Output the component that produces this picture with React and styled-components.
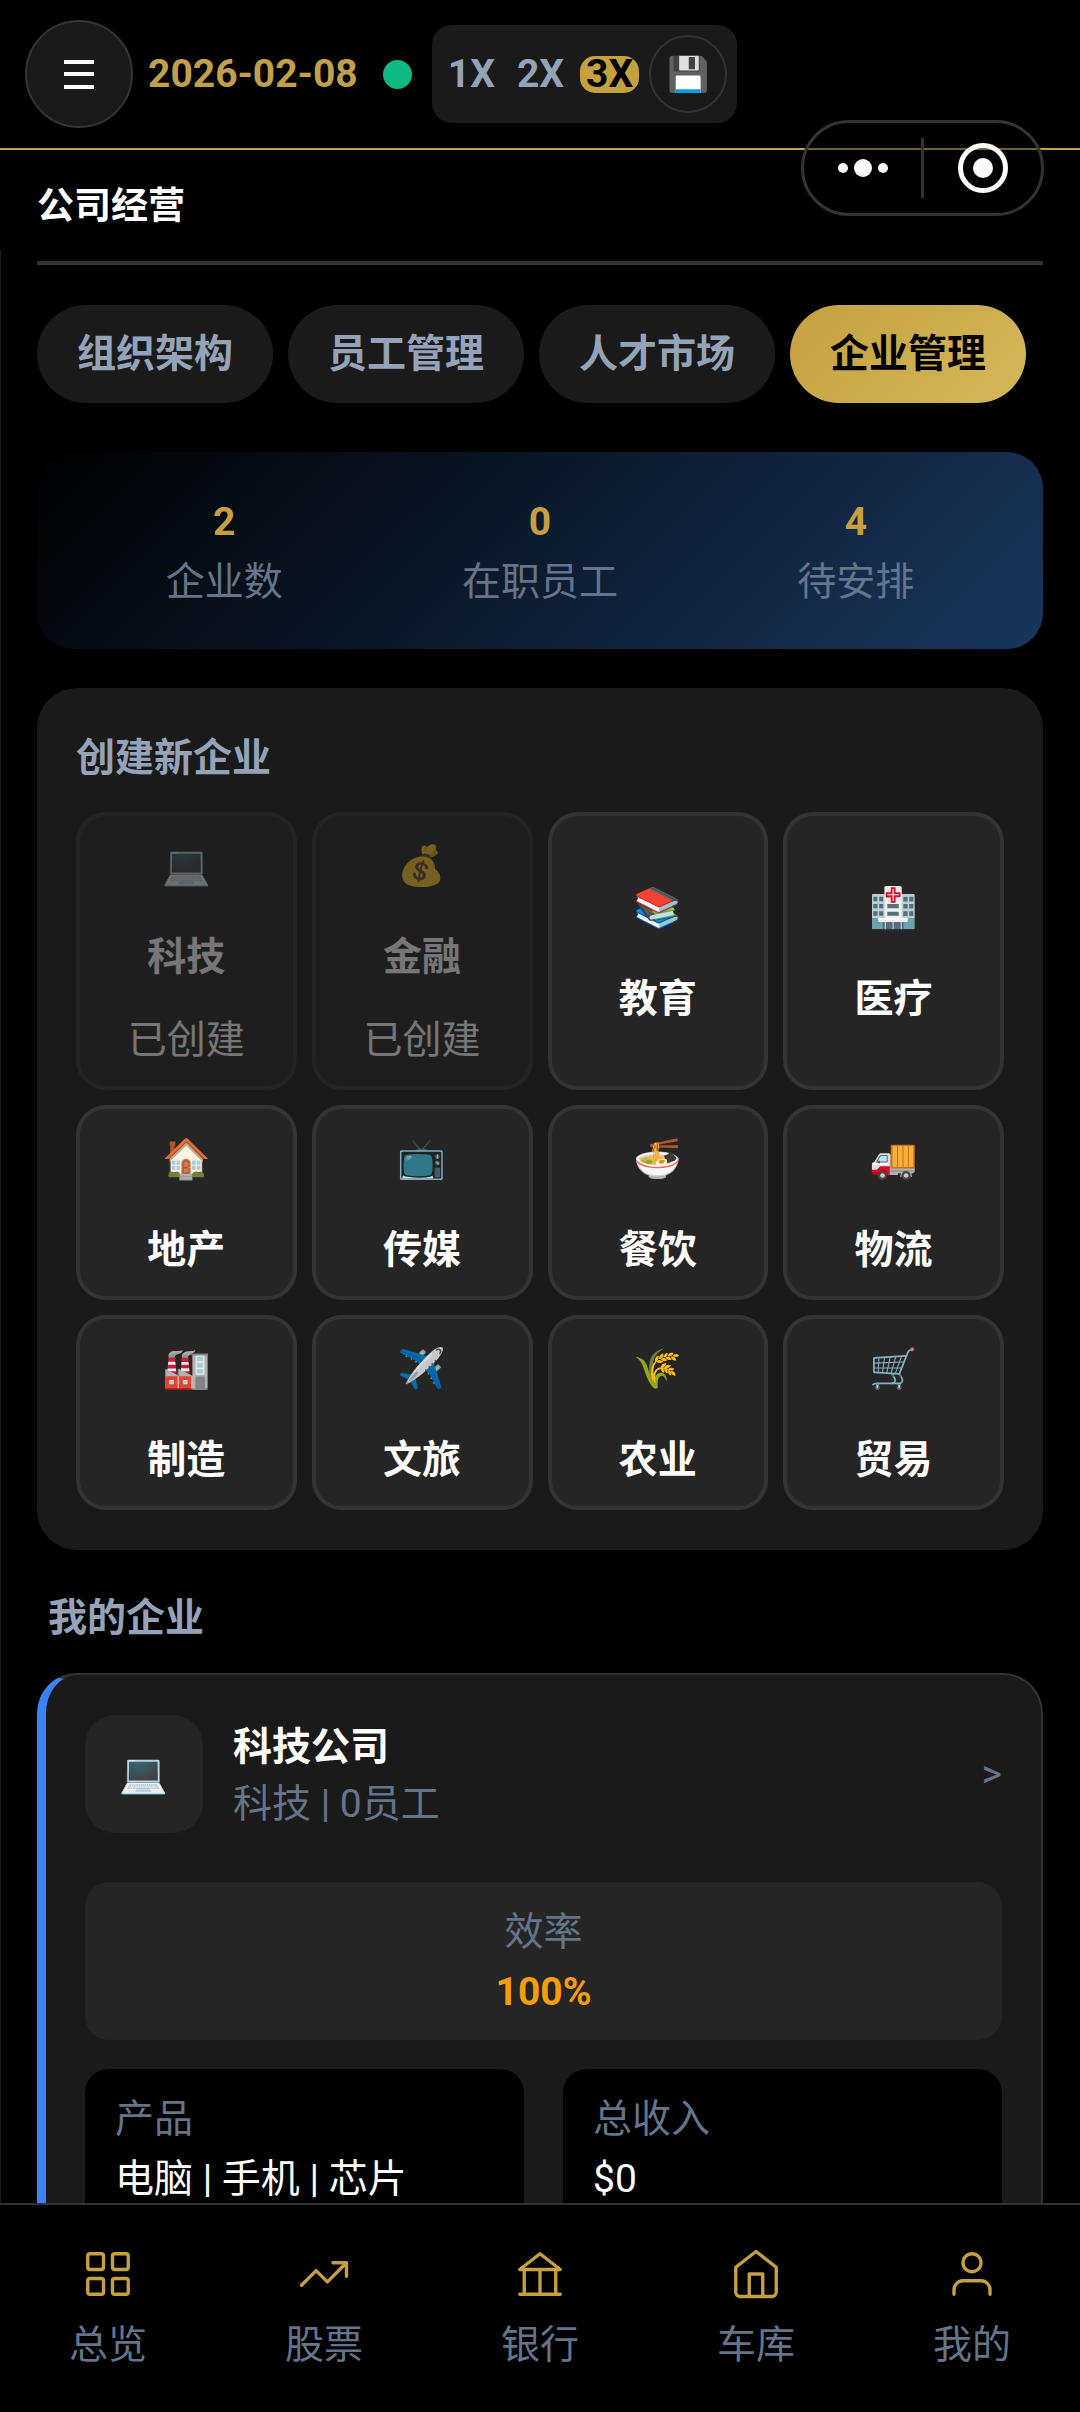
import React, { useState } from 'react';
import styled, { createGlobalStyle } from 'styled-components';


const industries = [
    { icon: '💻', name: '科技', created: true },
    { icon: '💰', name: '金融', created: true },
    { icon: '📚', name: '教育' },
    { icon: '🏥', name: '医疗' },
    { icon: '🏠', name: '地产' },
    { icon: '📺', name: '传媒' },
    { icon: '🍜', name: '餐饮' },
    { icon: '🚚', name: '物流' },
    { icon: '🏭', name: '制造' },
    { icon: '✈️', name: '文旅' },
    { icon: '🌾', name: '农业' },
    { icon: '🛒', name: '贸易' },
];

const stats = [
    { value: 2, label: '企业数' },
    { value: 0, label: '在职员工' },
    { value: 4, label: '待安排' },
];

const tabs = ['组织架构', '员工管理', '人才市场', '企业管理'];

const navItems = [
    {
        label: '总览',
        icon: (
            <>
                <rect x="3" y="3" width="7" height="7" rx="1" />
                <rect x="14" y="3" width="7" height="7" rx="1" />
                <rect x="3" y="14" width="7" height="7" rx="1" />
                <rect x="14" y="14" width="7" height="7" rx="1" />
            </>
        ),
    },
    {
        label: '股票',
        icon: <path d="M2 17l6.5-6.5 5 5L22 7M16 7h6v6" />,
    },
    {
        label: '银行',
        icon: <path d="M3 21h18M3 10h18L12 3zM5 10v11M12 10v11M19 10v11" />,
    },
    {
        label: '车库',
        icon: (
            <>
                <path d="M3 9l9-7 9 7v11a2 2 0 0 1-2 2H5a2 2 0 0 1-2-2z" />
                <path d="M9 22V12h6v10" />
            </>
        ),
    },
    {
        label: '我的',
        icon: (
            <>
                <circle cx="12" cy="7" r="4" />
                <path d="M20 21v-2a4 4 0 0 0-4-4H8a4 4 0 0 0-4 4v2" />
            </>
        ),
    },
];

const TopBar = () => {
    const [speed, setSpeed] = useState('3X');

    return (
        <Header>
            <RoundButton $size={108} aria-label="菜单">
                <svg width="30" height="30" viewBox="0 0 30 30" fill="#fff">
                    <path d="M0 1h30v4H0zM0 13h30v4H0zM0 26h30v4H0z" />
                </svg>
            </RoundButton>
            <GameDate>2026-02-08</GameDate>
            <StatusDot />
            <SpeedPanel>
                {['1X', '2X', '3X'].map((s) => (
                    <SpeedButton key={s} $active={s === speed} onClick={() => setSpeed(s)}>
                        {s}
                    </SpeedButton>
                ))}
                <RoundButton $size={78} aria-label="保存">💾</RoundButton>
            </SpeedPanel>
        </Header>
    );
};

const CompanyCard = () => {
    return (
        <Card>
            <CardHead>
                <Avatar>💻</Avatar>
                <CardText>
                    <CardTitle>科技公司</CardTitle>
                    <Muted>科技 | 0员工</Muted>
                </CardText>
                <Muted>&gt;</Muted>
            </CardHead>
            <Efficiency>
                <Muted>效率</Muted>
                <Percent>100%</Percent>
            </Efficiency>
            <InfoGrid>
                <InfoBox>
                    <Muted>产品</Muted>
                    <div>电脑 | 手机 | 芯片</div>
                </InfoBox>
                <InfoBox>
                    <Muted>总收入</Muted>
                    <div>$0</div>
                </InfoBox>
            </InfoGrid>
        </Card>
    );
};

const App = () => {
    const [tab, setTab] = useState('企业管理');

    return (
        <Page>
            <GlobalStyle />
            <TopBar />
            <Capsule>
                <CapsuleButton aria-label="更多">
                    <svg width="50" height="18" viewBox="0 0 50 18" fill="#fff">
                        <circle cx="5" cy="9" r="5" />
                        <circle cx="25" cy="9" r="9" />
                        <circle cx="45" cy="9" r="5" />
                    </svg>
                </CapsuleButton>
                <CapsuleLine />
                <CapsuleButton aria-label="关闭">
                    <svg width="50" height="50" viewBox="0 0 50 50">
                        <circle cx="25" cy="25" r="22.5" fill="none" stroke="#fff" strokeWidth="5" />
                        <circle cx="25" cy="25" r="10" fill="#fff" />
                    </svg>
                </CapsuleButton>
            </Capsule>
            <TitleBar>
                <PageTitle>公司经营</PageTitle>
            </TitleBar>
            <Content>
                <Divider />
                <Tabs>
                    {tabs.map((t) => (
                        <Tab key={t} $active={t === tab} onClick={() => setTab(t)}>
                            {t}
                        </Tab>
                    ))}
                </Tabs>
                <Stats>
                    {stats.map((s) => (
                        <Stat key={s.label}>
                            <StatValue>{s.value}</StatValue>
                            <Muted>{s.label}</Muted>
                        </Stat>
                    ))}
                </Stats>
                <Panel>
                    <SectionTitle>创建新企业</SectionTitle>
                    <Grid>
                        {industries.map((item) => (
                            <Tile key={item.name} disabled={item.created}>
                                <TileIcon>{item.icon}</TileIcon>
                                <strong>{item.name}</strong>
                                {item.created && <span>已创建</span>}
                            </Tile>
                        ))}
                    </Grid>
                </Panel>
                <MyTitle>我的企业</MyTitle>
                <CompanyCard />
            </Content>
            <BottomNav>
                {navItems.map((item) => (
                    <NavLink href="#" key={item.label}>
                        <NavIcon viewBox="0 0 24 24">{item.icon}</NavIcon>
                        {item.label}
                    </NavLink>
                ))}
            </BottomNav>
        </Page>
    );
};

const GlobalStyle = createGlobalStyle`
    * {
        box-sizing: border-box;
    }
    body {
        margin: 0;
        background: #000;
        color: #fff;
        font-family: Roboto, 'Noto Sans CJK SC', 'Noto Color Emoji', sans-serif;
        font-size: 39px;
        line-height: 60px;
    }
    button {
        border: none;
        padding: 0;
        color: inherit;
        font: inherit;
        cursor: pointer;
    }
`;

const Page = styled.div`
    position: relative;
    display: flex;
    flex-direction: column;
    height: 100vh;
    overflow: hidden;
`;

const Header = styled.header`
    display: flex;
    align-items: center;
    flex-shrink: 0;
    height: 150px;
    padding: 0 25px;
    border-bottom: 2px solid #c0a055;
`;

const RoundButton = styled.button`
    display: flex;
    align-items: center;
    justify-content: center;
    width: ${(props) => props.$size}px;
    height: ${(props) => props.$size}px;
    border: 2px solid #333;
    border-radius: 50%;
    background: #1a1a1a;
    font-size: 34px;
`;

const GameDate = styled.span`
    margin-left: 15px;
    color: #c0a04c;
    font-weight: 700;
`;

const StatusDot = styled.span`
    width: 29px;
    height: 29px;
    margin: 0 20px 0 25px;
    border-radius: 50%;
    background: #10b981;
`;

const SpeedPanel = styled.div`
    display: flex;
    align-items: center;
    height: 98px;
    padding: 0 10px;
    border-radius: 20px;
    background: #1a1a1a;
`;

const SpeedButton = styled.button`
    height: 37px;
    margin-right: 10px;
    padding: 0 6px;
    border-radius: 15px;
    background: ${(props) => (props.$active ? '#c5a03f' : 'none')};
    color: ${(props) => (props.$active ? '#000' : '#94a3b8')};
    font-weight: 700;
    line-height: 37px;
`;

const Capsule = styled.div`
    position: absolute;
    top: 120px;
    right: 36px;
    z-index: 10;
    display: flex;
    align-items: center;
    width: 243px;
    height: 96px;
    border: 3px solid #333;
    border-radius: 48px;
    background: rgba(0, 0, 0, 0.4);
`;

const CapsuleButton = styled.button`
    display: flex;
    flex: 1;
    align-items: center;
    justify-content: center;
    background: none;
`;

const CapsuleLine = styled.span`
    width: 3px;
    height: 60px;
    background: #333;
`;

const TitleBar = styled.div`
    display: flex;
    align-items: center;
    flex-shrink: 0;
    height: 100px;
    padding: 14px 37px 0;
`;

const PageTitle = styled.h1`
    margin: 0;
    font-size: 37px;
    font-weight: 700;
`;

const Content = styled.main`
    flex: 1;
    min-height: 0;
    overflow-y: auto;
    padding: 11px 37px 40px 36px;
    border-left: 1px solid #1f1c12;
    scrollbar-width: none;
`;

const Divider = styled.div`
    height: 4px;
    background: #333;
`;

const Tabs = styled.div`
    display: flex;
    gap: 15px;
    margin-top: 40px;
`;

const Tab = styled.button`
    height: 98px;
    padding: 0 40px;
    border-radius: 49px;
    background: ${(props) => (props.$active ? 'linear-gradient(135deg, #c5a03f, #d4b85a)' : '#1a1a1a')};
    color: ${(props) => (props.$active ? '#000' : '#94a3b8')};
    font-weight: 700;
    white-space: nowrap;
`;

const Stats = styled.section`
    display: flex;
    justify-content: space-around;
    margin-top: 49px;
    padding: 40px 39px 37px;
    border-radius: 36px;
    background: linear-gradient(135deg, #000, #1a365d);
`;

const Stat = styled.div`
    display: flex;
    flex-direction: column;
    align-items: center;
`;

const Muted = styled.div`
    color: #64748b;
`;

const StatValue = styled.div`
    color: #c5a03f;
    font-weight: 700;
`;

const Panel = styled.section`
    margin-top: 39px;
    padding: 40px 39px;
    border-radius: 40px;
    background: #1a1a1a;
`;

const SectionTitle = styled.h2`
    margin: 0;
    color: #94a3b8;
    font-size: 39px;
    font-weight: 700;
`;

const MyTitle = styled(SectionTitle)`
    margin: 38px 0 25px 11px;
`;

const Grid = styled.div`
    display: grid;
    grid-template-columns: repeat(4, 1fr);
    gap: 15px;
    margin-top: 24px;
`;

const Tile = styled.button`
    display: flex;
    flex-direction: column;
    align-items: center;
    justify-content: center;
    gap: 23px;
    padding: 20px 0 16px;
    border: 4px solid #333;
    border-radius: 30px;
    background: #252525;
    opacity: ${(props) => (props.disabled ? 0.4 : 1)};

    strong {
        font-weight: 700;
    }
`;

const TileIcon = styled.span`
    padding-bottom: 8px;
`;

const Card = styled.article`
    padding: 40px 39px;
    border: 2px solid #333;
    border-left: 9px solid #3b82f6;
    border-radius: 40px;
    background: #1a1a1a;
`;

const CardHead = styled.div`
    display: flex;
    align-items: center;
    gap: 30px;
`;

const Avatar = styled.div`
    display: flex;
    align-items: center;
    justify-content: center;
    width: 118px;
    height: 118px;
    border-radius: 30px;
    background: #252525;
`;

const CardText = styled.div`
    flex: 1;
    padding-top: 4px;
    line-height: 57px;
`;

const CardTitle = styled.h3`
    margin: 0;
    font-size: 39px;
    font-weight: 700;
`;

const Efficiency = styled.div`
    margin-top: 49px;
    padding: 20px 20px 18px;
    border-radius: 24px;
    background: #252525;
    text-align: center;
`;

const Percent = styled.div`
    color: #f59e0b;
    font-weight: 700;
`;

const InfoGrid = styled.div`
    display: grid;
    grid-template-columns: 1fr 1fr;
    gap: 39px;
    margin-top: 29px;
`;

const InfoBox = styled.div`
    padding: 20px 30px;
    border-radius: 24px;
    background: #000;
`;

const BottomNav = styled.nav`
    display: flex;
    flex-shrink: 0;
    height: 209px;
    padding-top: 42px;
    border-top: 2px solid #333;
`;

const NavLink = styled.a`
    display: flex;
    flex: 1;
    flex-direction: column;
    align-items: center;
    gap: 14px;
    color: #64748b;
    text-decoration: none;
`;

const NavIcon = styled.svg`
    width: 54px;
    height: 54px;
    fill: none;
    stroke: #c5a03f;
    stroke-width: 1.5;
    stroke-linecap: round;
    stroke-linejoin: round;
`;

export default App;
